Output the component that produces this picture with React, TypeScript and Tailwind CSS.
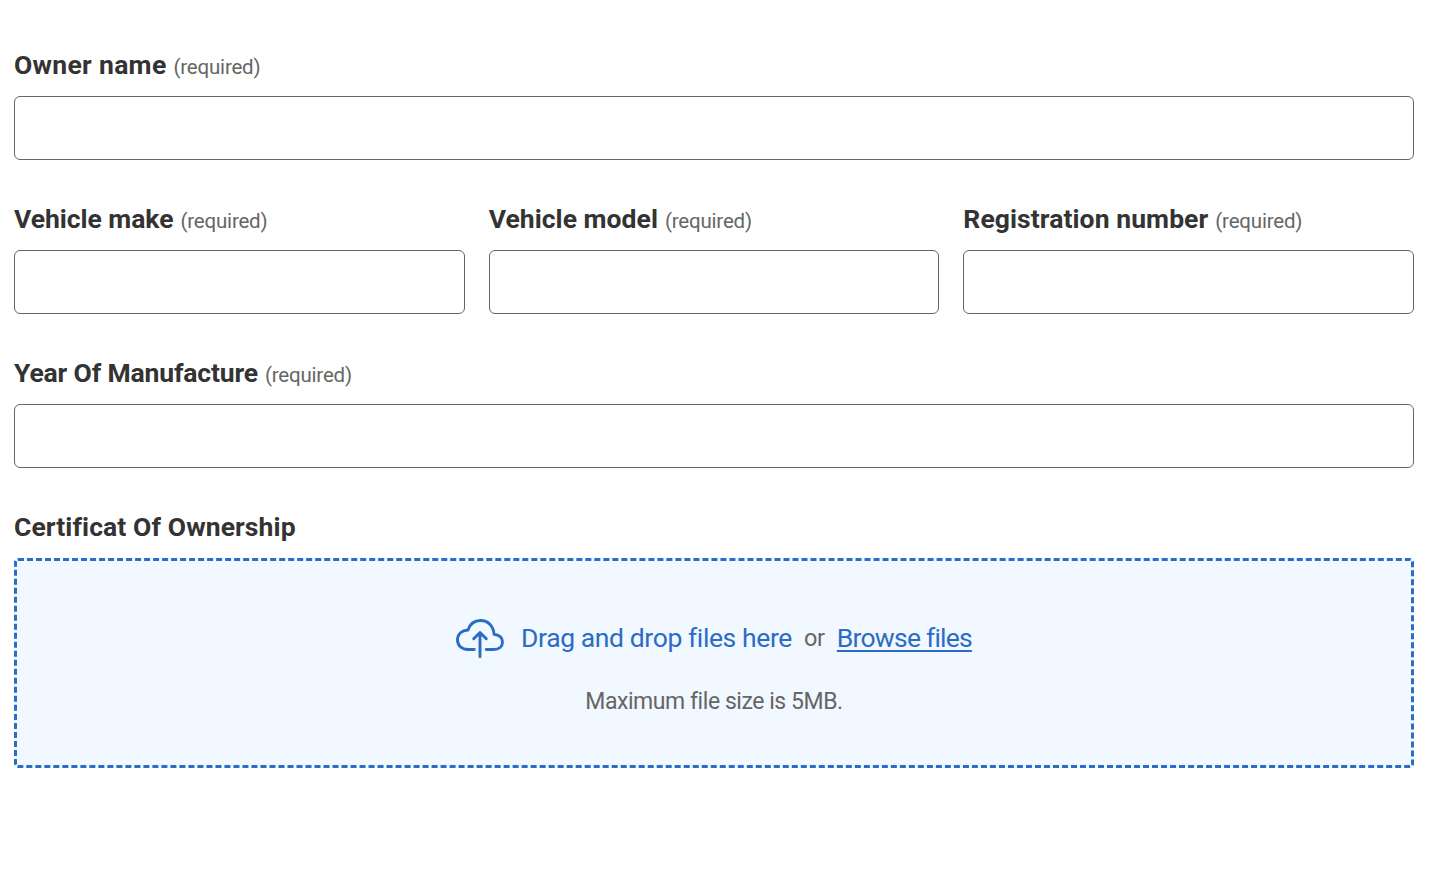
type FieldProps = { label: string; labelClass: string };

function Field({ label, labelClass }: FieldProps) {
  return (
    <label className="flex min-w-0 flex-1 flex-col">
      <span className="flex h-[50px] items-baseline gap-[7px] whitespace-nowrap leading-[38px] text-[#333333]">
        <span className={`text-[26.5px] font-bold ${labelClass}`}>{label}</span>
        <span className="text-[20.5px] text-[#666666] tracking-[-0.2px]">(required)</span>
      </span>
      <input className="h-16 w-full rounded-[6px] border border-[#666666] bg-white px-4 text-2xl outline-none" />
    </label>
  );
}

function CloudUpload() {
  return (
    <svg className="mt-0.5" width="48" height="40" viewBox="0 0 48 40" fill="none" stroke="#2b6cc4" strokeWidth="2.9" strokeLinecap="round" strokeLinejoin="round">
      <path d="M18.300 30.500H12C5.500 30.500 1.500 26.500 1.500 21C1.500 15.500 5.500 11.500 12 11C14 5 18.500 1.500 24.500 1.500C32 1.500 37.500 7 38 15.200C43.300 15.700 46.500 18.700 46.500 23C46.500 27.500 43 30.500 37.800 30.500H30.300" />
      <path d="M24 37.800V14M17.700 19.800L24 13.500L30.300 19.800" />
    </svg>
  );
}

export default function App() {
  return (
    <form className="flex h-[896px] w-[1430px] flex-col gap-10 overflow-hidden bg-white pl-[14px] pr-4 pt-[46px] font-['Roboto','Liberation_Sans',sans-serif]">
      <div className="flex">
        <Field label="Owner name" labelClass="tracking-[0.3px]" />
      </div>
      <div className="flex gap-6">
        <Field label="Vehicle make" labelClass="tracking-[-0.04px]" />
        <Field label="Vehicle model" labelClass="tracking-[0.04px]" />
        <Field label="Registration number" labelClass="tracking-[0.08px]" />
      </div>
      <div className="flex">
        <Field label="Year Of Manufacture" labelClass="tracking-[-0.15px]" />
      </div>
      <div>
        <div className="h-[50px] text-[26.5px] font-bold leading-[38px] text-[#333333]">
          <span className="tracking-[0.1px]">Certificat Of Ownership</span>
        </div>
        <div className="flex h-[210px] flex-col items-center rounded-[4px] border-[3px] border-dashed border-[#2b6cc4] bg-[#f1f8ff] pt-[57px]">
          <div className="flex h-10 items-center whitespace-nowrap leading-10 text-[#2b6cc4]">
            <CloudUpload />
            <span className="ml-[17px] text-[26.5px] tracking-[-0.4px]">Drag and drop files here</span>
            <span className="ml-3 text-[23.5px] tracking-[-0.2px] text-[#666666]">or</span>
            <button type="button" className="ml-3 text-[26.5px] tracking-[-0.78px] underline decoration-2 underline-offset-[3px]">Browse files</button>
          </div>
          <p className="mt-6 text-[23px] tracking-[-0.45px] leading-10 text-[#666666]">Maximum file size is 5MB.</p>
        </div>
      </div>
    </form>
  );
}
